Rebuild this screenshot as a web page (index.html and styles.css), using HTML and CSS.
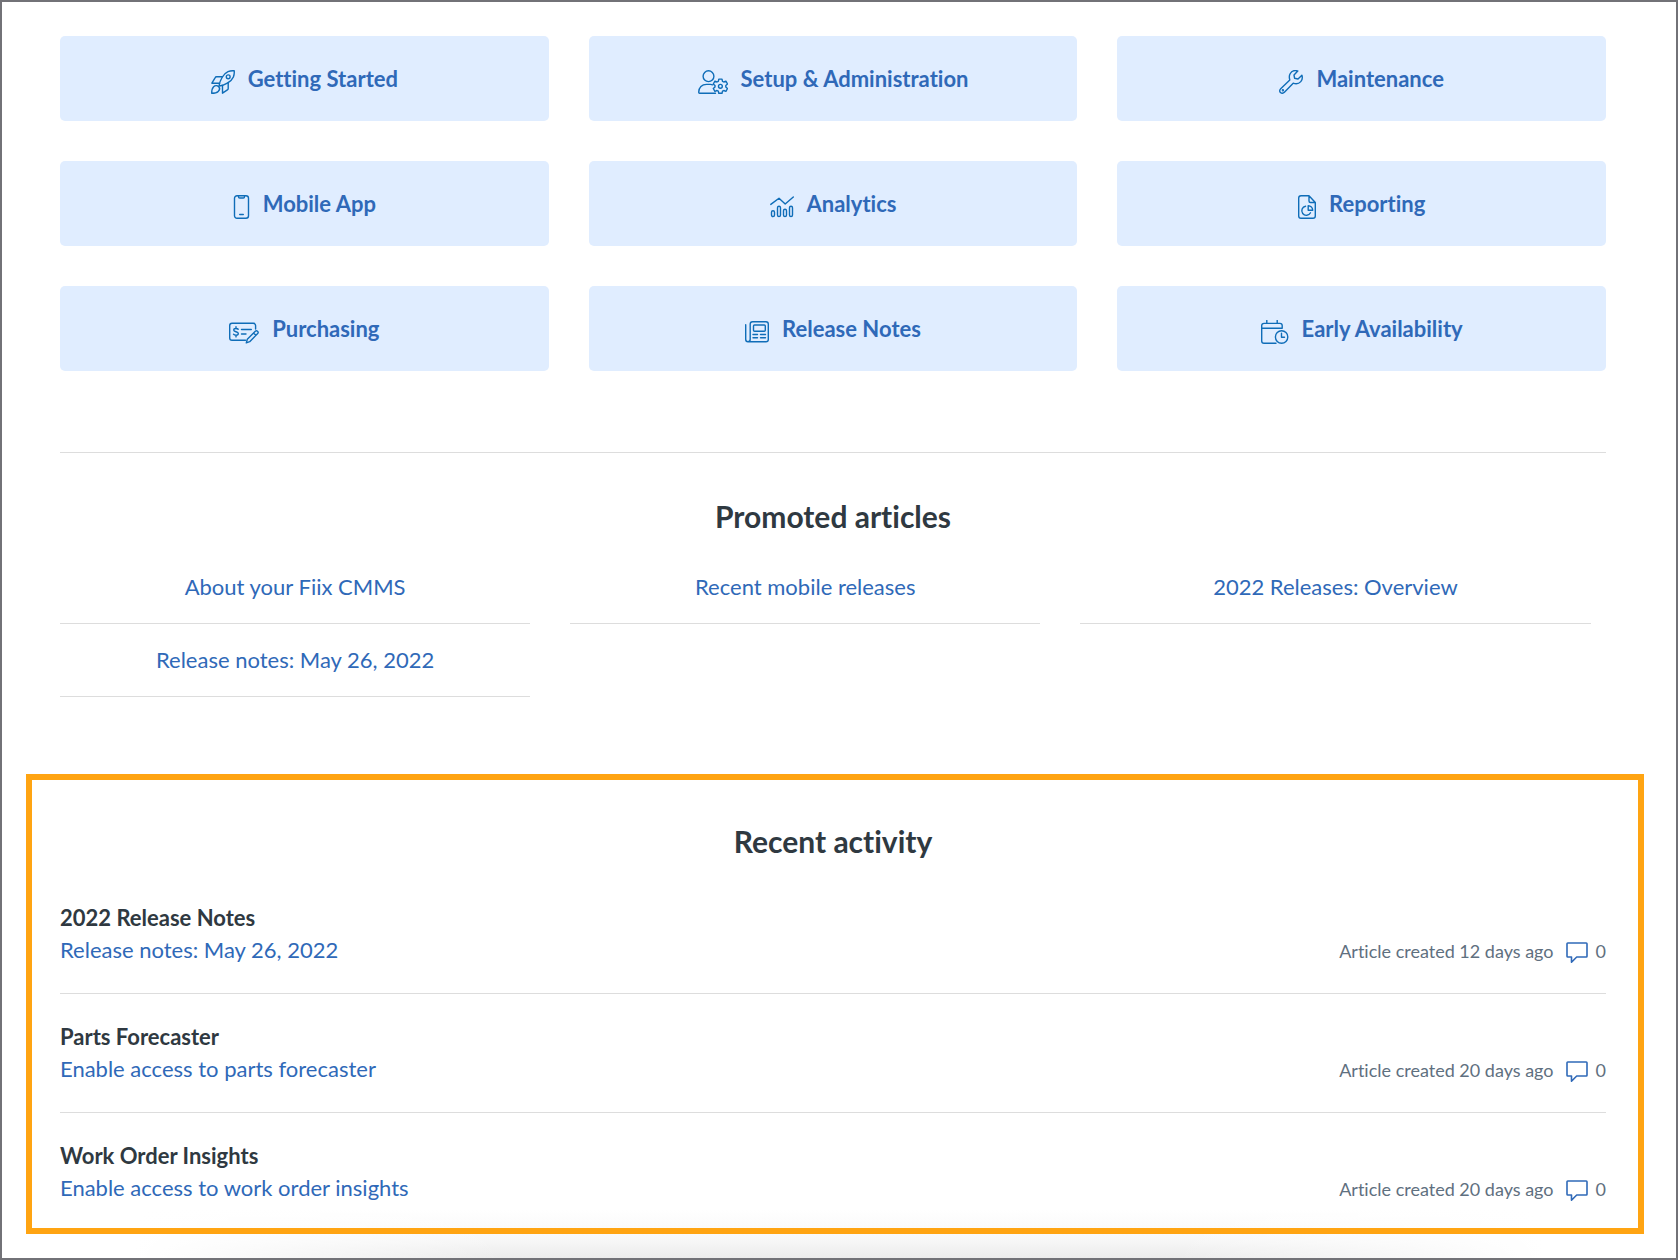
FILE: index.html
```html
<!DOCTYPE html>
<html lang="en">
  <head>
    <meta charset="UTF-8" />
    <meta name="viewport" content="width=device-width, initial-scale=1.0" />
    <title>Help Center</title>
    <link rel="stylesheet" href="styles.css">
  </head>
  <body>
    <main class="page">
      <nav class="blocks">
        <a class="block" href="#">
          <svg class="icon" width="24" height="24" viewBox="0 0 24 24">
            <path d="M8 15.8C9 10 12.5 3.500 17 1.600C19 .8 21.500 .6 23.200 .8C23.400 2.500 23.200 5 22.400 7C20.500 11.500 14 15 8.300 16Z" />
            <circle cx="17.200" cy="6.800" r="1.900" />
            <path d="M11.500 6.800H5.500Q4.600 6.800 4.200 7.600L.9 13.200H8.600" />
            <path d="M17.200 12.500V18.500Q17.200 19.400 16.400 19.800L11.500 23.200V15.400" />
            <path d="M7.900 16.900C6.500 15.500 4 15.400 2.600 16.800C1.200 18.200 .7 20.500 .7 23.300C3.500 23.300 5.800 22.800 7.200 21.400C8.600 20 8.900 18 7.900 16.900Z" />
          </svg>
          Getting Started
        </a>
        <a class="block" href="#">
          <svg class="icon" width="30" height="24" viewBox="0 0 30 24">
            <circle cx="10.500" cy="6.200" r="5.400" />
            <path d="M17.500 23.200H1.600Q.7 23.200 .7 22.300C.7 17.500 4 14.400 8.500 14.400H12.500Q13.600 14.400 14.600 14.800" />
            <path d="M20.800 9.100h3.200l.5 2.200 1.300.7 2.100-.8 1.600 2.800-1.700 1.500v1.500l1.700 1.500-1.600 2.800-2.100-.8-1.300.7-.5 2.100h-3.200l-.5-2.100-1.300-.7-2.100.8-1.600-2.800 1.700-1.500v-1.500l-1.700-1.500 1.600-2.800 2.100.8 1.300-.7z" />
            <circle cx="22.400" cy="16.300" r="1.900" />
          </svg>
          Setup &amp; Administration
        </a>
        <a class="block" href="#">
          <svg class="icon" width="24" height="24" viewBox="0 0 24 24">
            <path d="M18.800 1C15.800 .1 12.500 1 11 4C10 6 10.200 8 10.800 9.900L1.700 18.700C.4 20 .4 21.500 1.500 22.500C2.600 23.600 4.200 23.500 5.400 22.300L14.200 13.200C17 14.200 20 13.600 21.800 11.600C23.300 9.900 23.600 7.500 22.900 5.200L19 9L15.600 8.300L15 5Z" />
            <circle cx="3.900" cy="20.200" r=".5" />
          </svg>
          Maintenance
        </a>
        <a class="block" href="#">
          <svg class="icon" width="17" height="24" viewBox="0 0 17 24">
            <rect x="1.500" y=".7" width="14" height="22.600" rx="2.500" />
            <path d="M5.500 .8V1.800Q5.500 3 6.700 3H10.300Q11.500 3 11.500 1.800V.8M6.700 19.500H10.300" />
          </svg>
          Mobile App
        </a>
        <a class="block" href="#">
          <svg class="icon" width="24" height="24" viewBox="0 0 24 24">
            <path d="M.8 9.400L9 3.200L15.200 9L23.300 2" />
            <rect x="1.500" y="15.800" width="3" height="5.800" rx="1.500" />
            <rect x="7.500" y="11.300" width="3" height="10.300" rx="1.500" />
            <rect x="13.500" y="14.300" width="3" height="7.300" rx="1.500" />
            <rect x="19.500" y="11.300" width="3" height="10.300" rx="1.500" />
          </svg>
          Analytics
        </a>
        <a class="block" href="#">
          <svg class="icon" width="18" height="24" viewBox="0 0 18 24">
            <path d="M11 .7H3Q.7 .7 .7 3V21Q.7 23.300 3 23.300H15Q17.300 23.300 17.300 21V7.500ZM11 .7V6Q11 7.500 12.500 7.500H17.300" />
            <path d="M7.600 11.200A4.600 4.600 0 1 0 12.500 17.800" />
            <path d="M10.200 10.700V15.200H14.700A4.600 4.600 0 0 0 10.200 10.700Z" />
          </svg>
          Reporting
        </a>
        <a class="block" href="#">
          <svg class="icon" width="30" height="24" viewBox="0 0 30 24">
            <path d="M16.500 20.300H3Q.7 20.300 .7 18V5.600Q.7 3.300 3 3.300H24.300Q26.600 3.300 26.600 5.600V9" />
            <path d="M9.200 9.200C8.500 8.300 4.700 7.900 4.700 10C4.700 12.200 9.300 11.200 9.300 13.500C9.300 15.700 5.400 15.400 4.500 14.200M7 6.700V8.300M7 15.300V16.900M12.500 9.500H22.300M12.500 14H17" />
            <path d="M18.300 19.200L26.300 11.200Q27.400 10.200 28.500 11.200Q29.800 12.400 28.700 13.500L20.700 21.700L17.300 22.900ZM24.500 13L26.900 15.300" />
          </svg>
          Purchasing
        </a>
        <a class="block" href="#">
          <svg class="icon" width="24" height="24" viewBox="0 0 24 24">
            <path d="M.7 4.800V19.300Q.7 21.800 2.900 21.800Q5.200 21.800 5.200 19.300V4Q5.200 1.700 7.500 1.700H21Q23.300 1.700 23.300 4V19.500Q23.300 21.800 21 21.800H2.900" />
            <rect x="8.500" y="5" width="11.800" height="6.200" rx="1" />
            <path d="M8 14.500H12.500M15.500 14.500H20.500M8 17.800H12.500M15.500 17.800H20.500" />
          </svg>
          Release Notes
        </a>
        <a class="block" href="#">
          <svg class="icon" width="28" height="24" viewBox="0 0 28 24">
            <path d="M15 23.200H3Q.7 23.200 .7 21V5.600Q.7 3.400 3 3.400H19Q21.200 3.400 21.200 5.600V8.300H.7M5.800 .3V3.400M16.200 .3V3.400" />
            <circle cx="20.600" cy="17" r="6.200" />
            <path d="M20.500 13.300V17.300H23.500" />
          </svg>
          Early Availability
        </a>
      </nav>

      <section class="promoted">
        <h2>Promoted articles</h2>
        <ul class="promoted-list">
          <li><a href="#">About your Fiix CMMS</a></li>
          <li><a href="#">Recent mobile releases</a></li>
          <li><a href="#">2022 Releases: Overview</a></li>
          <li><a href="#">Release notes: May 26, 2022</a></li>
        </ul>
      </section>

      <section class="activity">
        <h2>Recent activity</h2>
        <ul class="activity-list">
          <li class="activity-item">
            <h3>2022 Release Notes</h3>
            <div class="activity-row">
              <a href="#">Release notes: May 26, 2022</a>
              <div class="meta">
                <span>Article created 12 days ago</span>
                <span class="comments">
                  <svg class="bubble" width="22" height="22" viewBox="0 0 22 22">
                    <path d="M1.800 1H20.200Q21 1 21 1.800V14.200Q21 15 20.200 15H10.700L5.500 20.200V15H1.800Q1 15 1 14.200V1.800Q1 1 1.800 1Z" />
                  </svg>
                  0
                </span>
              </div>
            </div>
          </li>
          <li class="activity-item">
            <h3>Parts Forecaster</h3>
            <div class="activity-row">
              <a href="#">Enable access to parts forecaster</a>
              <div class="meta">
                <span>Article created 20 days ago</span>
                <span class="comments">
                  <svg class="bubble" width="22" height="22" viewBox="0 0 22 22">
                    <path d="M1.800 1H20.200Q21 1 21 1.800V14.200Q21 15 20.200 15H10.700L5.500 20.200V15H1.800Q1 15 1 14.200V1.800Q1 1 1.800 1Z" />
                  </svg>
                  0
                </span>
              </div>
            </div>
          </li>
          <li class="activity-item">
            <h3>Work Order Insights</h3>
            <div class="activity-row">
              <a href="#">Enable access to work order insights</a>
              <div class="meta">
                <span>Article created 20 days ago</span>
                <span class="comments">
                  <svg class="bubble" width="22" height="22" viewBox="0 0 22 22">
                    <path d="M1.800 1H20.200Q21 1 21 1.800V14.200Q21 15 20.200 15H10.700L5.500 20.200V15H1.800Q1 15 1 14.200V1.800Q1 1 1.800 1Z" />
                  </svg>
                  0
                </span>
              </div>
            </div>
          </li>
        </ul>
      </section>
    </main>
  </body>
</html>
```
FILE: styles.css
```css
* {
  box-sizing: border-box;
}

body {
  margin: 0;
  font-family: Lato, sans-serif;
  font-size: 22px;
  line-height: 32px;
  font-variant-ligatures: none;
  color: #2f3941;
  background-color: #ffffff;
}

a {
  color: #2f69b8;
  text-decoration: none;
}

a:hover {
  text-decoration: underline;
}

ul {
  list-style: none;
  margin: 0;
  padding: 0;
}

h2 {
  margin: 0;
  font-size: 30px;
  line-height: 36px;
  font-weight: 700;
  text-align: center;
}

h3 {
  margin: 0;
  font-size: 22px;
  line-height: 32px;
  font-weight: 700;
}

/* soft shadow along the bottom edge, faded out at both sides */
.page {
  min-height: 100vh;
  padding: 34px 70px 24px 58px;
  border: 2px solid #727277;
  background: linear-gradient(90deg, #ffffff 8%, transparent 30%, transparent 70%, #ffffff 92%),
    linear-gradient(0deg, #ececec, #f8f8f8 20px, #ffffff 48px);
}

/* category tiles */
.blocks {
  display: grid;
  grid-template-columns: repeat(3, 1fr);
  gap: 40px;
  padding-bottom: 81px;
  border-bottom: 1px solid #dddddd;
}

.block {
  display: flex;
  justify-content: center;
  align-items: center;
  gap: 13px;
  height: 85px;
  border-radius: 5px;
  background-color: #e0edff;
  font-weight: 700;
}

.icon {
  margin-top: 6px;
  fill: none;
  stroke: #0f6db8;
  stroke-width: 1.400;
  stroke-linecap: round;
  stroke-linejoin: round;
}

/* promoted articles */
.promoted {
  padding-top: 45px;
}

.promoted-list {
  display: flex;
  flex-wrap: wrap;
  padding-top: 17px;
}

.promoted-list li {
  width: 33%;
  padding-right: 40px;
}

.promoted-list li:nth-child(3n) {
  padding-right: 0;
}

.promoted-list a {
  display: block;
  padding: 20px 0;
  border-bottom: 1px solid #dddddd;
  text-align: center;
}

/* recent activity */
.activity {
  margin: 77px -38px 0 -34px;
  padding: 43px 32px 24px 28px;
  border: 6px solid #ffa412;
}

.activity-list {
  padding-top: 16px;
}

.activity-item {
  padding: 27px 0;
  border-bottom: 1px solid #dddddd;
}

.activity-item:last-child {
  padding-bottom: 0;
  border-bottom: none;
}

.activity-row {
  display: flex;
  justify-content: space-between;
  align-items: center;
}

.meta {
  display: flex;
  gap: 12px;
  padding-top: 2px;
  line-height: 30px;
  font-size: 18px;
  color: #5f7080;
}

.comments {
  display: flex;
  align-items: center;
  gap: 8px;
}

.bubble {
  margin-top: 3px;
  fill: none;
  stroke: #2f69b8;
  stroke-width: 1.600;
  stroke-linejoin: round;
}
```
